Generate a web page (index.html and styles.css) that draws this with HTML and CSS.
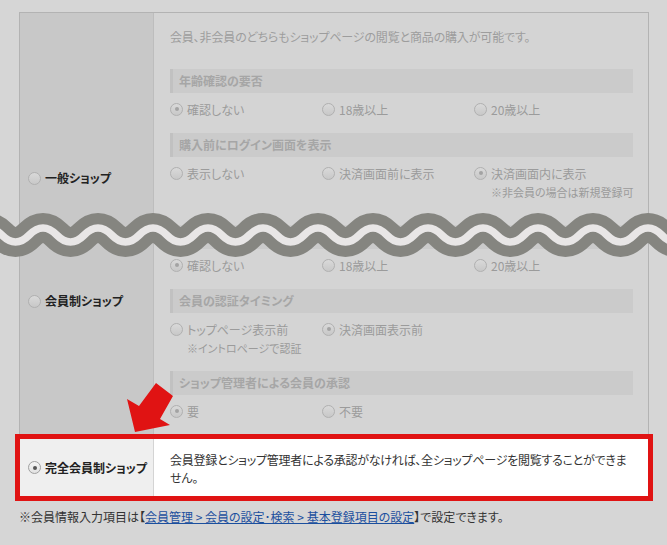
FILE: index.html
```html
<!DOCTYPE html>
<html lang="ja">
<head>
<meta charset="utf-8">
<title>ショップ種別</title>
<link rel="stylesheet" href="styles.css">
</head>
<body>
<div class="page">
  <div class="settings">
    <div class="row row-general">
      <div class="label-cell">
        <div class="label"><span class="radio"></span><span class="label-text">一般ショップ</span></div>
      </div>
      <div class="body-cell">
        <p class="desc">会員、非会員のどちらもショップページの閲覧と商品の購入が可能です。</p>
        <div class="group">
          <h3 class="group-title">年齢確認の要否</h3>
          <div class="options">
            <div class="opt"><div class="opt-line"><span class="radio on"></span>確認しない</div></div>
            <div class="opt"><div class="opt-line"><span class="radio"></span>18歳以上</div></div>
            <div class="opt"><div class="opt-line"><span class="radio"></span>20歳以上</div></div>
          </div>
        </div>
        <div class="group">
          <h3 class="group-title">購入前にログイン画面を表示</h3>
          <div class="options">
            <div class="opt"><div class="opt-line"><span class="radio"></span>表示しない</div></div>
            <div class="opt"><div class="opt-line"><span class="radio"></span>決済画面前に表示</div></div>
            <div class="opt"><div class="opt-line"><span class="radio on"></span>決済画面内に表示</div><div class="opt-note">※非会員の場合は新規登録可</div></div>
          </div>
        </div>
      </div>
    </div>
    <div class="row row-member">
      <div class="label-cell">
        <div class="label"><span class="radio"></span><span class="label-text">会員制ショップ</span></div>
      </div>
      <div class="body-cell">
        <div class="group">
          <h3 class="group-title">年齢確認の要否</h3>
          <div class="options">
            <div class="opt"><div class="opt-line"><span class="radio on"></span>確認しない</div></div>
            <div class="opt"><div class="opt-line"><span class="radio"></span>18歳以上</div></div>
            <div class="opt"><div class="opt-line"><span class="radio"></span>20歳以上</div></div>
          </div>
        </div>
        <div class="group">
          <h3 class="group-title">会員の認証タイミング</h3>
          <div class="options">
            <div class="opt"><div class="opt-line"><span class="radio"></span>トップページ表示前</div><div class="opt-note">※イントロページで認証</div></div>
            <div class="opt"><div class="opt-line"><span class="radio on"></span>決済画面表示前</div></div>
          </div>
        </div>
        <div class="group">
          <h3 class="group-title">ショップ管理者による会員の承認</h3>
          <div class="options">
            <div class="opt"><div class="opt-line"><span class="radio on"></span>要</div></div>
            <div class="opt"><div class="opt-line"><span class="radio"></span>不要</div></div>
          </div>
        </div>
      </div>
    </div>
    <div class="row row-full">
      <div class="label-cell">
        <div class="label"><span class="radio on"></span><span class="label-text">完全会員制ショップ</span></div>
      </div>
      <div class="body-cell">会員登録とショップ管理者による承認がなければ、全ショップページを閲覧することができません。</div>
    </div>
  </div>
  <p class="footnote">※会員情報入力項目は【<a class="link" href="#">会員管理 &gt; 会員の設定･検索 &gt; 基本登録項目の設定</a>】で設定できます。</p>

  <svg class="wave" width="667" height="60" viewBox="0 0 667 60" aria-hidden="true">
    <path class="wave-dark" d="M -25.75 30 q 13.75 -14 27.5 0 t 27.5 0 t 27.5 0 t 27.5 0 t 27.5 0 t 27.5 0 t 27.5 0 t 27.5 0 t 27.5 0 t 27.5 0 t 27.5 0 t 27.5 0 t 27.5 0 t 27.5 0 t 27.5 0 t 27.5 0 t 27.5 0 t 27.5 0 t 27.5 0 t 27.5 0 t 27.5 0 t 27.5 0 t 27.5 0 t 27.5 0 t 27.5 0 t 27.5 0 t 27.5 0"/>
    <path class="wave-light" d="M -25.75 30 q 13.75 -14 27.5 0 t 27.5 0 t 27.5 0 t 27.5 0 t 27.5 0 t 27.5 0 t 27.5 0 t 27.5 0 t 27.5 0 t 27.5 0 t 27.5 0 t 27.5 0 t 27.5 0 t 27.5 0 t 27.5 0 t 27.5 0 t 27.5 0 t 27.5 0 t 27.5 0 t 27.5 0 t 27.5 0 t 27.5 0 t 27.5 0 t 27.5 0 t 27.5 0 t 27.5 0 t 27.5 0"/>
  </svg>

  <svg class="arrow" width="60" height="60" viewBox="0 0 60 60" aria-hidden="true">
    <polygon points="36,5 53,18 40,41 50,47 15,54 7,21 19,28" fill="#e01313"/>
  </svg>
</div>
</body>
</html>
```

FILE: styles.css
```css
body {
  margin: 0;
  background: #d6d6d6;
  font-family: "Noto Sans CJK JP", "Noto Sans", sans-serif;
  font-size: 12px;
  font-feature-settings: "palt";
}

.page {
  position: relative;
  width: 667px;
  height: 545px;
  padding: 12px 0 0 19px;
  box-sizing: border-box;
  overflow: hidden;
}

.settings {
  width: 630px;
  box-sizing: border-box;
  border: 1px solid #b3b3b3;
  background: #d4d4d4;
}

.row {
  display: grid;
  grid-template-columns: 134px 1fr;
}

.label-cell {
  background: #c8c8c8;
  border-right: 1px solid #bdbdbd;
  padding-left: 8px;
  display: flex;
  align-items: flex-start;
}

.label {
  display: flex;
  align-items: center;
  gap: 4px;
  height: 18px;
}

.label-text {
  font-weight: bold;
  color: #222;
  line-height: 18px;
}

.row-general .label-cell { padding-top: 156px; }
.row-member .label-cell { padding-top: 82px; }

.body-cell {
  padding: 15px 15px 9px 16px;
  min-width: 0;
}

.row-member .body-cell {
  padding-bottom: 18px;
}

.desc {
  margin: 0 0 23px;
  line-height: 18px;
  color: #9d9d9d;
  letter-spacing: -0.15px;
}

.group + .group { margin-top: 14px; }

.group-title {
  margin: 0;
  height: 24px;
  line-height: 24px;
  background: #cbcbcb;
  border-left: 3px solid #c1c1c1;
  padding-left: 6px;
  font-size: 12px;
  font-weight: bold;
  color: #a6a6a6;
}

.options {
  display: grid;
  grid-template-columns: repeat(3, 152px);
  margin-top: 6px;
}

.opt-line {
  display: flex;
  align-items: center;
  gap: 4px;
  height: 20px;
  color: #9b9b9b;
  white-space: nowrap;
}

.opt-note {
  padding-left: 17px;
  line-height: 18px;
  font-size: 11px;
  color: #9b9b9b;
  white-space: nowrap;
}

.radio {
  flex: none;
  position: relative;
  width: 13px;
  height: 13px;
  box-sizing: border-box;
  border-radius: 50%;
  border: 1px solid #b0b0b0;
  background: linear-gradient(#d9d9d9, #c8c8c8);
}

.radio.on::after {
  content: "";
  position: absolute;
  left: 3.5px;
  top: 3.5px;
  width: 4px;
  height: 4px;
  border-radius: 50%;
  background: #a3a3a3;
}

.row-full {
  position: relative;
  z-index: 1;
  outline: 5px solid #e01313;
}

.row-full .label-cell {
  background: #efefef;
  border-right-color: #d4d4d4;
  padding-top: 0;
  align-items: center;
}

.row-full .radio {
  border-color: #a0a0a0;
  background: linear-gradient(#f4f4f4, #e2e2e2);
}

.row-full .radio.on::after { background: #555; }

.row-full .body-cell {
  background: #fff;
  padding: 12px 15px 9px 16px;
  line-height: 18px;
  color: #333;
  letter-spacing: -0.25px;
}

.footnote {
  margin: 11px 0 0;
  line-height: 18px;
  color: #333;
}

.link {
  color: #1b4f9e;
  text-decoration: underline;
}

.wave {
  position: absolute;
  left: 0;
  top: 205px;
  z-index: 2;
}

.wave path { fill: none; }
.wave-dark { stroke: #858580; stroke-width: 30; }
.wave-light { stroke: #e8e6e6; stroke-width: 7.5; }

.arrow {
  position: absolute;
  left: 120px;
  top: 378px;
  z-index: 3;
}
```
